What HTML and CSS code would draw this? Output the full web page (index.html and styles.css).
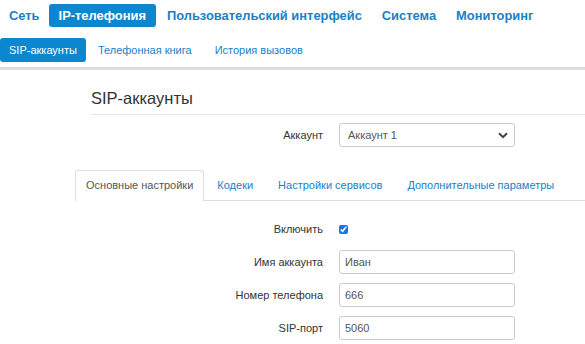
FILE: index.html
```html
<!DOCTYPE html>
<html lang="ru">
<head>
    <meta charset="UTF-8">
    <title>SIP-аккаунты</title>
    <link rel="stylesheet" href="styles.css">
</head>
<body>
    <nav class="main-nav">
        <a href="#">Сеть</a>
        <a href="#" class="active">IP-телефония</a>
        <a href="#">Пользовательский интерфейс</a>
        <a href="#">Система</a>
        <a href="#">Мониторинг</a>
    </nav>
    <nav class="sub-nav">
        <a href="#" class="active">SIP-аккаунты</a>
        <a href="#">Телефонная книга</a>
        <a href="#">История вызовов</a>
    </nav>
    <div class="divider"></div>

    <div class="page">
        <h2 class="page-title">SIP-аккаунты</h2>

        <div class="form-row account-row">
            <label for="account">Аккаунт</label>
            <div class="select-wrap">
                <select id="account">
                    <option>Аккаунт 1</option>
                </select>
                <svg class="chevron" width="10" height="7" viewBox="0 0 10 7"><path d="M1 1.2 5 5.2 9 1.2" fill="none" stroke="#444" stroke-width="2"/></svg>
            </div>
        </div>

        <ul class="tabs">
            <li class="active">Основные настройки</li>
            <li>Кодеки</li>
            <li>Настройки сервисов</li>
            <li>Дополнительные параметры</li>
        </ul>

        <div class="form-row check-row">
            <label for="enable">Включить</label>
            <div><input type="checkbox" id="enable" checked></div>
        </div>
        <div class="form-row">
            <label for="name">Имя аккаунта</label>
            <input type="text" id="name" value="Иван">
        </div>
        <div class="form-row">
            <label for="phone">Номер телефона</label>
            <input type="text" id="phone" value="666">
        </div>
        <div class="form-row">
            <label for="port">SIP-порт</label>
            <input type="text" id="port" value="5060">
        </div>
    </div>
</body>
</html>
```

FILE: styles.css
```css
body {
    margin: 0;
    font-family: "Liberation Sans", Arial, sans-serif;
    color: #333;
    background: #fff;
    overflow: hidden;
}
a {
    text-decoration: none;
    color: #1a80c8;
    white-space: nowrap;
    flex-shrink: 0;
}
.main-nav {
    display: flex;
    align-items: center;
    padding-top: 4px;
    height: 23px;
}
.main-nav a {
    font-size: 12.9px;
    font-weight: bold;
    line-height: 23px;
    padding: 0 10px;
    border-radius: 3px;
}
.main-nav a:first-child {
    padding: 0 9px;
}
.main-nav a:nth-child(3) {
    margin-left: 1px;
}
.main-nav a.active {
    background: #0b87cf;
    color: #fff;
}
.sub-nav {
    display: flex;
    align-items: center;
    margin-top: 11px;
    height: 24px;
}
.sub-nav a {
    font-size: 11px;
    line-height: 24px;
    padding: 0 11px;
    margin-right: 1px;
    border-radius: 3px;
}
.sub-nav a.active {
    background: #0b87cf;
    color: #fff;
    padding: 0 9px;
}
.divider {
    height: 3px;
    background: #ddd;
    margin-top: 5px;
}
.page {
    padding-left: 75px;
}
.page-title {
    margin: 17px 0 0 16px;
    font-size: 16.5px;
    font-weight: normal;
    line-height: 22px;
    padding-bottom: 5px;
    border-bottom: 1px solid #e5e5e5;
    color: #333;
}
.form-row {
    display: grid;
    grid-template-columns: 248px 176px;
    column-gap: 16px;
    align-items: center;
    margin-bottom: 9px;
}
.form-row label {
    text-align: right;
    font-size: 11px;
    color: #333;
    white-space: nowrap;
}
.account-row {
    margin-top: 8px;
    margin-bottom: 0;
}
.select-wrap {
    position: relative;
}
select {
    width: 176px;
    height: 24px;
    border: 1px solid #ccc;
    border-radius: 3px;
    background: #fff;
    font-family: inherit;
    font-size: 11px;
    color: #555;
    padding: 0 8px;
    appearance: none;
    -webkit-appearance: none;
}
.chevron {
    position: absolute;
    right: 7px;
    top: 9px;
    pointer-events: none;
}
.tabs {
    display: flex;
    list-style: none;
    margin: 23px 0 0 0;
    padding: 0;
    border-bottom: 1px solid #ddd;
}
.tabs li {
    font-size: 11px;
    color: #1a80c8;
    line-height: 29px;
    padding: 0 11px;
    margin-right: 1px;
    border: 1px solid transparent;
    border-bottom: none;
    margin-bottom: -1px;
    white-space: nowrap;
    flex-shrink: 0;
}
.tabs li.active {
    color: #555;
    background: #fff;
    border-color: #ddd;
    border-radius: 3px 3px 0 0;
    padding: 0 10px;
    height: 30px;
}
.check-row {
    margin-top: 19px;
    margin-bottom: 12px;
}
.check-row input {
    margin: 0;
    width: 9px;
    height: 9px;
    accent-color: #1a73e8;
}
input[type="text"] {
    box-sizing: border-box;
    width: 176px;
    height: 24px;
    border: 1px solid #ccc;
    border-radius: 3px;
    font-family: inherit;
    font-size: 11px;
    color: #555;
    padding: 0 5px;
}
```
